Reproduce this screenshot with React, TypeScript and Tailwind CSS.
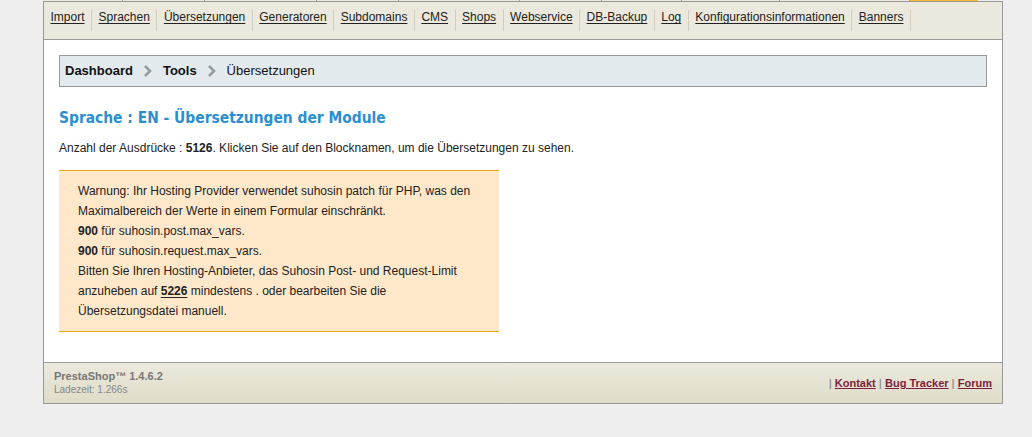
import React from "react";

const menu = [
  "Import",
  "Sprachen",
  "Übersetzungen",
  "Generatoren",
  "Subdomains",
  "CMS",
  "Shops",
  "Webservice",
  "DB-Backup",
  "Log",
  "Konfigurationsinformationen",
  "Banners",
];

// widths of the tab row that peeks in above the menu
const tabs = [80, 82, 112, 82, 121, 82, 80, 98, 130];

const Chevron: React.FC = () => (
  <svg width="12" height="14" viewBox="0 0 12 14" className="mx-[9px] shrink-0">
    <polyline points="3,2 8,7 3,12" fill="none" stroke="#9a9a9a" strokeWidth="2.6" />
  </svg>
);

const App: React.FC = () => {
  return (
    <div
      className="min-h-[437px] w-full bg-[#eeeeee] text-[12px] text-[#222]"
      style={{ fontFamily: '"Liberation Sans", Arial, sans-serif' }}
    >
      <div className="ml-[43px] w-[960px]">
        {/* tabs row (cut off) */}
        <div className="flex h-[1px]">
          {tabs.map((w, i) => (
            <div key={i} style={{ width: w }} className="border-r border-[#999] bg-[#ebe8dc]" />
          ))}
          <div className="w-[68px] bg-[#fbb92f]" />
        </div>

        {/* sub menu */}
        <div className="flex h-[39px] items-start border border-[#999] bg-[#ebe9dd] pt-[8px]">
          {menu.map((m) => (
            <div key={m} className="flex h-[21px] items-start border-r border-[#d0cdbf]">
              <a className="px-[6.5px] leading-[14px] text-[#222] underline underline-offset-2">
                {m}
              </a>
            </div>
          ))}
        </div>

        {/* content */}
        <div className="border-x border-[#999] bg-white px-[15px] pb-[30px] pt-[15px]">
          <div className="flex h-[32px] items-center border border-[#999] bg-[#e2eaed] px-[5px] pb-[1px] text-[13px] text-[#111]">
            <span className="font-bold">Dashboard</span>
            <Chevron />
            <span className="font-bold">Tools</span>
            <Chevron />
            <span>Übersetzungen</span>
          </div>

          <h2
            className="mt-[20px] text-[15.4px] font-bold leading-[22px] text-[#2b8fd0]"
            style={{ fontFamily: '"DejaVu Sans Condensed", "DejaVu Sans", Verdana, sans-serif' }}
          >
            Sprache : EN - Übersetzungen der Module
          </h2>

          <p className="mt-[11px] leading-[16px]">
            Anzahl der Ausdrücke : <b>5126</b>. Klicken Sie auf den Blocknamen, um die Übersetzungen zu sehen.
          </p>

          <div className="mt-[14px] w-[440px] border-y border-[#f8a21b] bg-[#ffe8c9] px-[19px] pb-[10px] pt-[10px] leading-[20px]">
            Warnung: Ihr Hosting Provider verwendet suhosin patch für PHP, was den Maximalbereich der Werte in einem Formular einschränkt.
            <br />
            <b>900</b> für suhosin.post.max_vars.
            <br />
            <b>900</b> für suhosin.request.max_vars.
            <br />
            Bitten Sie Ihren Hosting-Anbieter, das Suhosin Post- und Request-Limit anzuheben auf{" "}
            <b className="underline underline-offset-2">5226</b> mindestens . oder bearbeiten Sie die Übersetzungsdatei manuell.
          </div>
        </div>

        {/* footer */}
        <div className="flex h-[42px] items-center justify-between border border-[#999] bg-gradient-to-b from-[#ebe9dd] to-[#dfdcc8] px-[10px]">
          <div>
            <div className="text-[11px] font-bold leading-[13px] text-[#777]">PrestaShop™ 1.4.6.2</div>
            <div className="text-[10px] leading-[13px] text-[#888]">Ladezeit: 1.266s</div>
          </div>
          <div className="text-[11px] font-bold text-[#999]">
            | <a className="text-[#7a1f3d] underline underline-offset-1">Kontakt</a> |{" "}
            <a className="text-[#7a1f3d] underline underline-offset-1">Bug Tracker</a> |{" "}
            <a className="text-[#7a1f3d] underline underline-offset-1">Forum</a>
          </div>
        </div>
      </div>
    </div>
  );
};

export default App;
